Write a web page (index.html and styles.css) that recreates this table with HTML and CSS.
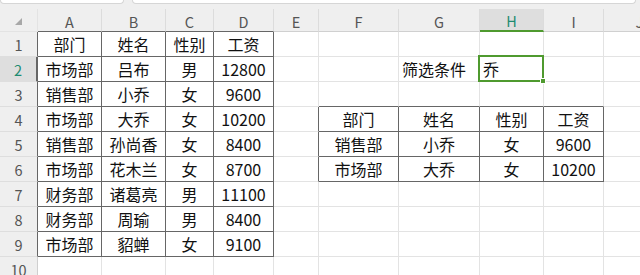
FILE: index.html
```html
<!DOCTYPE html>
<html lang="zh">
<head>
<meta charset="utf-8">
<link rel="stylesheet" href="styles.css">
</head>
<body>
<div class="topbar">
  <div class="box box-name"></div>
  <div class="box box-formula"></div>
</div>
<div class="sheet">
  <div class="corner"><svg width="7" height="7" viewBox="0 0 7 7"><polygon points="7,0 7,7 0,7" fill="#a8a8a8"/></svg></div>
  <div class="ch ab">A</div><div class="ch ab">B</div><div class="ch ab">C</div><div class="ch ab">D</div>
  <div class="ch">E</div><div class="ch">F</div><div class="ch">G</div><div class="ch ch-active">H</div><div class="ch">I</div><div class="ch">J</div>

  <div class="rh al">1</div>
  <div class="c t">部门</div><div class="c t">姓名</div><div class="c t">性别</div><div class="c t">工资</div>
  <div class="c"></div><div class="c"></div><div class="c"></div><div class="c"></div><div class="c"></div><div class="c"></div>

  <div class="rh al rh-active">2</div>
  <div class="c t">市场部</div><div class="c t">吕布</div><div class="c t">男</div><div class="c t">12800</div>
  <div class="c"></div><div class="c"></div><div class="c left">筛选条件</div><div class="c left active">乔</div><div class="c"></div><div class="c"></div>

  <div class="rh al">3</div>
  <div class="c t">销售部</div><div class="c t">小乔</div><div class="c t">女</div><div class="c t">9600</div>
  <div class="c"></div><div class="c ab"></div><div class="c ab"></div><div class="c ab"></div><div class="c ab"></div><div class="c"></div>

  <div class="rh al">4</div>
  <div class="c t">市场部</div><div class="c t">大乔</div><div class="c t">女</div><div class="c t">10200</div>
  <div class="c al"></div><div class="c t">部门</div><div class="c t">姓名</div><div class="c t">性别</div><div class="c t">工资</div><div class="c"></div>

  <div class="rh al">5</div>
  <div class="c t">销售部</div><div class="c t">孙尚香</div><div class="c t">女</div><div class="c t">8400</div>
  <div class="c al"></div><div class="c t">销售部</div><div class="c t">小乔</div><div class="c t">女</div><div class="c t">9600</div><div class="c"></div>

  <div class="rh al">6</div>
  <div class="c t">市场部</div><div class="c t">花木兰</div><div class="c t">女</div><div class="c t">8700</div>
  <div class="c al"></div><div class="c t">市场部</div><div class="c t">大乔</div><div class="c t">女</div><div class="c t">10200</div><div class="c"></div>

  <div class="rh al">7</div>
  <div class="c t">财务部</div><div class="c t">诸葛亮</div><div class="c t">男</div><div class="c t">11100</div>
  <div class="c"></div><div class="c"></div><div class="c"></div><div class="c"></div><div class="c"></div><div class="c"></div>

  <div class="rh al">8</div>
  <div class="c t">财务部</div><div class="c t">周瑜</div><div class="c t">男</div><div class="c t">8400</div>
  <div class="c"></div><div class="c"></div><div class="c"></div><div class="c"></div><div class="c"></div><div class="c"></div>

  <div class="rh al">9</div>
  <div class="c t">市场部</div><div class="c t">貂蝉</div><div class="c t">女</div><div class="c t">9100</div>
  <div class="c"></div><div class="c"></div><div class="c"></div><div class="c"></div><div class="c"></div><div class="c"></div>

  <div class="rh">10</div>
  <div class="c"></div><div class="c"></div><div class="c"></div><div class="c"></div>
  <div class="c"></div><div class="c"></div><div class="c"></div><div class="c"></div><div class="c"></div><div class="c"></div>
</div>
</body>
</html>
```
FILE: styles.css
```css
html, body {
  margin: 0;
  padding: 0;
  width: 640px;
  height: 275px;
  overflow: hidden;
  background: #ffffff;
  font-family: "Noto Sans CJK SC", "Noto Sans", sans-serif;
}

.topbar {
  height: 9px;
  background: #efefef;
  display: flex;
  gap: 8px;
  align-items: flex-start;
}

.box {
  height: 3px;
  background: #ffffff;
  border: 1px solid #d6d6d6;
  border-top: none;
  border-radius: 0 0 4px 4px;
}

.box-name { width: 122px; }
.box-formula { flex: 1; margin-right: 4px; }

.sheet {
  display: grid;
  grid-template-columns: 38px 64px 64px 48px 60px 45px 80px 81px 64px 60px 72px;
  grid-template-rows: 23px;
  grid-auto-rows: 25px;
  width: 676px;
}

.sheet > div {
  box-sizing: border-box;
  border-right: 1px solid #e3e3e3;
  border-bottom: 1px solid #e3e3e3;
}

.corner {
  background: #efefef;
  display: flex;
  align-items: flex-end;
  justify-content: flex-start;
  padding: 0 0 6px 15px;
}

.corner svg { display: block; }

.ch {
  background: #efefef;
  color: #555555;
  font-size: 14.5px;
  display: flex;
  align-items: center;
  justify-content: center;
  padding-top: 2px;
  border-right-color: #dcdcdc !important;
  border-bottom-color: #d0d0d0 !important;
}

.ch-active {
  background: #dedede;
  color: #1e8c72;
  border-bottom: 2px solid #4f9a2f !important;
}

.rh {
  background: #efefef;
  color: #555555;
  font-size: 14.5px;
  display: flex;
  align-items: center;
  justify-content: center;
  border-bottom-color: #dedede !important;
  border-right-color: #cfcfcf !important;
}

.rh-active {
  background: #dedede;
  color: #1e8c72;
  border-right: 2px solid #4f9a2f !important;
}

.c {
  font-size: 16px;
  color: #111111;
  display: flex;
  align-items: center;
  justify-content: center;
  white-space: nowrap;
  background: #ffffff;
}

.c.left {
  justify-content: flex-start;
  padding-left: 3px;
}

.t {
  border-right-color: #666666 !important;
  border-bottom-color: #666666 !important;
}

.ab { border-bottom-color: #666666 !important; }
.al { border-right-color: #666666 !important; }

.active {
  position: relative;
}

.active::after {
  content: "";
  position: absolute;
  top: -2px;
  left: -2px;
  right: -1px;
  bottom: -1px;
  border: 2px solid #4f9a2f;
}

.active::before {
  content: "";
  position: absolute;
  right: -3px;
  bottom: -3px;
  width: 4px;
  height: 4px;
  background: #4f9a2f;
  border: 1px solid #ffffff;
  z-index: 2;
}
```
